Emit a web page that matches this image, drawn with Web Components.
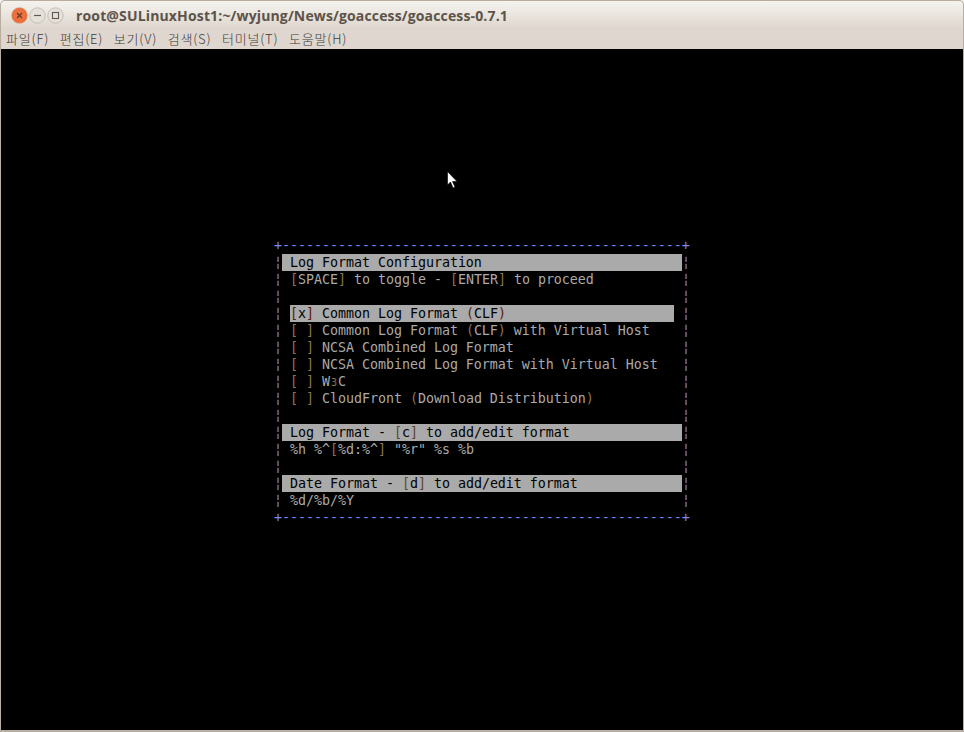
<!DOCTYPE html>
<html>
<head>
<meta charset="utf-8">
<title>goaccess</title>
<style>
  html, body { margin: 0; height: 100%; background: #000; }
</style>
</head>
<body>
<term-window title-text="root@SULinuxHost1:~/wyjung/News/goaccess/goaccess-0.7.1">
  <menu-bar items="파일(F),편집(E),보기(V),검색(S),터미널(T),도움말(H)"></menu-bar>
  <log-dialog></log-dialog>
</term-window>

<script>
class WindowButtons extends HTMLElement {
    constructor() {
        super();
        this.attachShadow({ mode: 'open' });
        this.shadowRoot.innerHTML = `
            <style>
                :host { display: flex; align-items: center; gap: 1px; }
                svg { display: block; }
            </style>
            <svg width="17" height="17" viewBox="0 0 17 17">
                <defs>
                    <radialGradient id="c" cx="50%" cy="45%" r="60%">
                        <stop offset="0" stop-color="#e8764a"/>
                        <stop offset="1" stop-color="#ee6a32"/>
                    </radialGradient>
                </defs>
                <circle cx="8.5" cy="8.5" r="8" fill="url(#c)" stroke="#c9c0b6" stroke-width="0.6"/>
                <path d="M6 6 L11 11 M11 6 L6 11" stroke="#6b3a28" stroke-width="1.3" fill="none"/>
            </svg>
            <svg width="17" height="17" viewBox="0 0 17 17">
                <circle cx="8.5" cy="8.5" r="7.7" fill="#e6e0da" stroke="#bdb5ab" stroke-width="0.8"/>
                <path d="M5 8.5 H12" stroke="#5f5a54" stroke-width="1.2" fill="none"/>
            </svg>
            <svg width="17" height="17" viewBox="0 0 17 17">
                <circle cx="8.5" cy="8.5" r="7.7" fill="#e6e0da" stroke="#bdb5ab" stroke-width="0.8"/>
                <rect x="5.5" y="5.5" width="6" height="6" stroke="#5f5a54" stroke-width="1.1" fill="none"/>
            </svg>
        `;
    }
}

class MenuBar extends HTMLElement {
    constructor() {
        super();
        this.attachShadow({ mode: 'open' });
        const items = (this.getAttribute('items') || '').split(',');
        this.shadowRoot.innerHTML = `
            <style>
                :host {
                    display: flex;
                    flex: none;
                    height: 21px;
                    align-items: center;
                    padding-left: 6px;
                    gap: 10.6px;
                    font: 300 13px "Noto Sans CJK KR", "Noto Sans", sans-serif;
                    letter-spacing: 0.8px;
                    color: #3c3b37;
                    background: #dfd7cf;
                }
            </style>
            ${items.map(t => `<span>${t}</span>`).join('')}
        `;
    }
}

class TermWindow extends HTMLElement {
    constructor() {
        super();
        this.attachShadow({ mode: 'open' });
        this.shadowRoot.innerHTML = `
            <style>
                :host {
                    display: flex;
                    flex-direction: column;
                    height: 732px;
                    width: 964px;
                    box-sizing: border-box;
                    background: #000;
                    position: relative;
                    overflow: hidden;
                }
                .frame {
                    position: absolute;
                    inset: 0;
                    border: 1px solid #b9ada0;
                    border-bottom-width: 2px;
                    border-radius: 5px 5px 0 0;
                    pointer-events: none;
                }
                .title {
                    display: flex;
                    flex: none;
                    align-items: center;
                    box-sizing: border-box;
                    height: 28px;
                    padding: 3px 0 0 11px;
                    gap: 12px;
                    background: linear-gradient(#f6f4f0, #dfd7cf);
                }
                .title span {
                    font: bold 14px "Open Sans", "Noto Sans", sans-serif;
                    letter-spacing: 0.15px;
                    color: #5c5349;
                }
                .cursor { position: absolute; left: 447px; top: 171px; }
            </style>
            <div class="title">
                <window-buttons></window-buttons>
                <span>${this.getAttribute('title-text')}</span>
            </div>
            <slot></slot>
            <div class="frame"></div>
            <svg class="cursor" width="11" height="18" viewBox="0 0 11 18">
                <path d="M0.5 0.5 V14 L3.5 11 L6 17 L8 16 L5.5 10.5 H10 Z" fill="#fff" stroke="#000" stroke-width="0.6"/>
            </svg>
        `;
    }
}

class LogDialog extends HTMLElement {
    constructor() {
        super();
        this.attachShadow({ mode: 'open' });
        const dashes = '-'.repeat(50);
        const d = s => `<i>${s}</i>`;
        const row = (inner, cls = '') => `<div class="row ${cls}"><b>¦</b><span class="mid">${inner}</span><b>¦</b></div>`;
        this.shadowRoot.innerHTML = `
            <style>
                :host {
                    display: block;
                    flex: none;
                    margin: 188px 0 0 274px;
                    width: 416px;
                    font: 13.33px "DejaVu Sans Mono", monospace;
                    letter-spacing: -0.03px;
                    line-height: 17px;
                    color: #aaaaaa;
                }
                .row { display: flex; height: 17px; white-space: pre; }
                b { font-weight: normal; color: #7c88ee; width: 8px; flex: none; }
                .edge b { width: auto; }
                .mid { display: block; width: 400px; flex: none; padding-left: 8px; box-sizing: border-box; }
                i { font-style: normal; color: #8f7350; }
                .head .mid { background: #aaaaaa; color: #000; }
                .head i { color: #5a4630; }
                .sel .mid { padding-left: 0; margin-left: 8px; margin-right: 8px; width: 384px; background: #aaaaaa; color: #000; }
                .sel i { color: #5a1a10; }
                small { font-size: 10px; color: #8f7350; }
            </style>
            <div class="row edge"><b>+${dashes}+</b></div>
            ${row('Log Format Configuration', 'head')}
            ${row(`${d('[')}SPACE${d(']')} to toggle - ${d('[')}ENTER${d(']')} to proceed`)}
            ${row('')}
            ${row(`${d('[')}x${d(']')} Common Log Format ${d('(')}CLF${d(')')}`, 'sel')}
            ${row(`${d('[ ]')} Common Log Format ${d('(')}CLF${d(')')} with Virtual Host`)}
            ${row(`${d('[ ]')} NCSA Combined Log Format`)}
            ${row(`${d('[ ]')} NCSA Combined Log Format with Virtual Host`)}
            ${row(`${d('[ ]')} W<small style="display:inline-block;width:8px;text-align:center">3</small>C`)}
            ${row(`${d('[ ]')} CloudFront ${d('(')}Download Distribution${d(')')}`)}
            ${row('')}
            ${row(`Log Format - ${d('[')}c${d(']')} to add/edit format`, 'head')}
            ${row(`%h %^${d('[')}%d:%^${d(']')} "%r" %s %b`)}
            ${row('')}
            ${row(`Date Format - ${d('[')}d${d(']')} to add/edit format`, 'head')}
            ${row('%d/%b/%Y')}
            <div class="row edge"><b>+${dashes}+</b></div>
        `;
    }
}

customElements.define('window-buttons', WindowButtons);
customElements.define('menu-bar', MenuBar);
customElements.define('term-window', TermWindow);
customElements.define('log-dialog', LogDialog);
</script>
</body>
</html>
